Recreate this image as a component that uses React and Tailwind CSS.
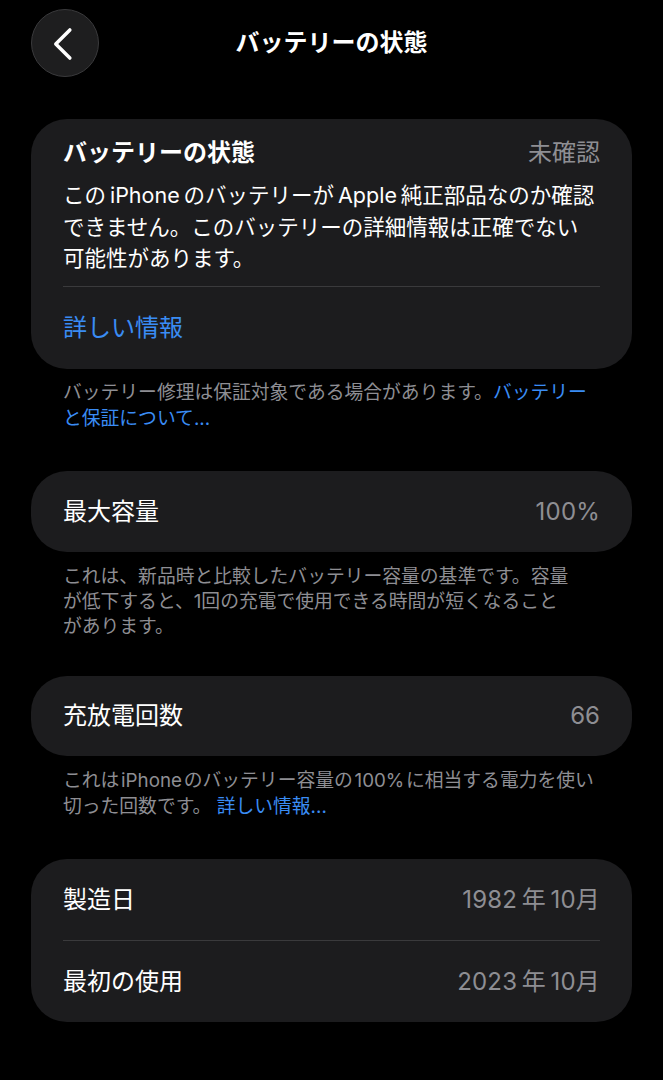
import React from 'react';

const sp = '\u2009';
const hs = '\u200A';

const Row = ({ label, value }) => (
  <div className="flex h-[81px] items-center justify-between px-8">
    <span className="text-[24px] text-white">{label}</span>
    <span className="text-[24px] tracking-[0.2px] text-[#8e8e93]">{value}</span>
  </div>
);

const Footer = ({ children, className = '' }) => (
  <p className={`whitespace-nowrap px-8 text-[18.8px] text-[#8e8e93] ${className}`}>{children}</p>
);

const App = () => {
  return (
    <div className="min-h-screen bg-black px-[31px] pt-[8px] pb-10 font-[Inter,'Noto_Sans_CJK_JP',sans-serif] text-white">
      {/* Header */}
      <div className="grid h-[69px] grid-cols-[68px_1fr_68px] items-center">
        <button className="flex h-[68px] w-[68px] items-center justify-center rounded-full border border-[#3a3a3c] bg-[#1e1e1f]">
          <svg width="68" height="68" viewBox="0 0 68 68" fill="none">
            <polyline
              points="39,20.5 24.5,35 39,49.5"
              stroke="white"
              strokeWidth="3.6"
              strokeLinecap="round"
              strokeLinejoin="round"
            />
          </svg>
        </button>
        <h1 className="text-center text-[24px] font-semibold leading-none">バッテリーの状態</h1>
        <div />
      </div>

      {/* Battery health */}
      <div className="mt-[42px] rounded-[36px] bg-[#1c1c1e] px-8 pt-[18px]">
        <div className="flex h-[32px] items-center justify-between">
          <span className="text-[24px] font-semibold">バッテリーの状態</span>
          <span className="text-[24px] text-[#8e8e93]">未確認</span>
        </div>
        <p className="mt-[11px] text-[21.5px] leading-[31.5px]">
          この{sp}iPhone{sp}のバッテリーが{sp}Apple{sp}純正部品なのか確認
          <br />
          できません。このバッテリーの詳細情報は正確でない
          <br />
          可能性があります。
        </p>
        <div className="mt-[11.5px] h-px bg-[#3a3a3c]" />
        <div className="flex h-[82px] items-center">
          <span className="text-[24px] text-[#3a8cf4]">詳しい情報</span>
        </div>
      </div>
      <Footer className="mt-[11px] leading-[26px]">
        バッテリー修理は保証対象である場合があります。<span className="text-[#3a8cf4]">バッテリー</span>
        <br />
        <span className="text-[#3a8cf4]">と保証について...</span>
      </Footer>

      {/* Max capacity */}
      <div className="mt-[39px] rounded-[36px] bg-[#1c1c1e]">
        <Row label="最大容量" value="100%" />
      </div>
      <Footer className="mt-[12px] leading-[25px]">
        これは、新品時と比較したバッテリー容量の基準です。容量
        <br />
        が低下すると、1回の充電で使用できる時間が短くなること
        <br />
        があります。
      </Footer>

      {/* Cycle count */}
      <div className="mt-[37px] rounded-[36px] bg-[#1c1c1e]">
        <div className="flex h-[80px] items-center justify-between px-8">
          <span className="text-[24px] text-white">充放電回数</span>
          <span className="text-[24px] text-[#8e8e93]">66</span>
        </div>
      </div>
      <Footer className="mt-[12px] leading-[26px]">
        これは{hs}iPhone{hs}のバッテリー容量の{hs}100%{hs}に相当する電力を使い
        <br />
        切った回数です。 <span className="text-[#3a8cf4]">詳しい情報...</span>
      </Footer>

      {/* Dates */}
      <div className="mt-[39px] rounded-[36px] bg-[#1c1c1e]">
        <Row label="製造日" value={`1982${sp}年${sp}10月`} />
        <div className="mx-8 h-px bg-[#3a3a3c]" />
        <Row label="最初の使用" value={`2023${sp}年${sp}10月`} />
      </div>
    </div>
  );
};

export default App;
